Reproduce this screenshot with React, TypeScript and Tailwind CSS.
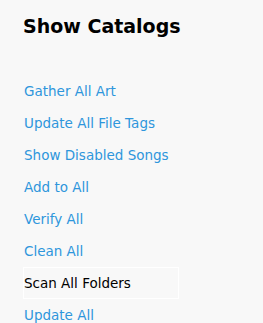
const items = [
  'Gather All Art',
  'Update All File Tags',
  'Show Disabled Songs',
  'Add to All',
  'Verify All',
  'Clean All',
  'Scan All Folders',
  'Update All',
]

const active = 'Scan All Folders'

export default function App() {
  return (
    <div className="min-h-screen bg-[#f8f8f8] pl-[23px] pt-[14px] font-['DejaVu_Sans',sans-serif]">
      <h1 className="text-[19px] font-bold leading-[24px] text-black">Show Catalogs</h1>

      <ul className="mt-[37px] w-[156px]">
        {items.map((item) => (
          <li
            key={item}
            className={
              item === active
                ? 'h-[32px] border border-white text-[13.5px] leading-[30px] text-black'
                : 'h-[32px] border border-transparent text-[13.5px] leading-[30px] text-[#2e96dc]'
            }
          >
            {item}
          </li>
        ))}
      </ul>
    </div>
  )
}
